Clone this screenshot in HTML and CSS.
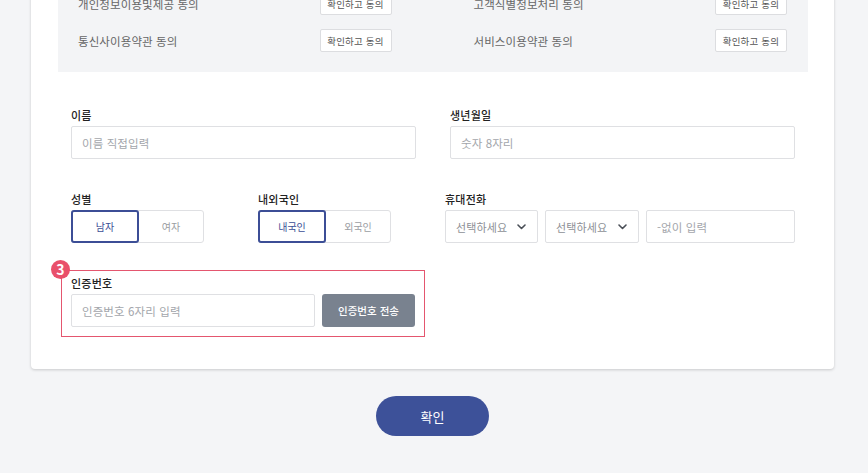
FILE: index.html
```html
<!DOCTYPE html>
<html lang="ko">
<head>
<meta charset="utf-8">
<title>본인인증</title>
<link rel="stylesheet" href="styles.css">
</head>
<body>
<div class="page">
  <div class="card">
    <div class="agree">
      <div class="agree-row"><span>개인정보이용및제공 동의</span><button class="agree-btn">확인하고 동의</button></div>
      <div class="agree-row"><span>고객식별정보처리 동의</span><button class="agree-btn">확인하고 동의</button></div>
      <div class="agree-row"><span>통신사이용약관 동의</span><button class="agree-btn">확인하고 동의</button></div>
      <div class="agree-row"><span>서비스이용약관 동의</span><button class="agree-btn">확인하고 동의</button></div>
    </div>

    <div class="form">
      <div class="row row-main">
        <div class="field field-half">
          <label class="label">이름</label>
          <input class="input" type="text" placeholder="이름 직접입력">
        </div>
        <div class="field field-half">
          <label class="label">생년월일</label>
          <input class="input" type="text" placeholder="숫자 8자리">
        </div>
      </div>

      <div class="row row-sub">
        <div class="field field-toggle">
          <label class="label">성별</label>
          <div class="toggle">
            <span class="toggle-opt is-on">남자</span>
            <span class="toggle-opt">여자</span>
          </div>
        </div>
        <div class="field field-toggle">
          <label class="label">내외국인</label>
          <div class="toggle">
            <span class="toggle-opt is-on">내국인</span>
            <span class="toggle-opt">외국인</span>
          </div>
        </div>
        <div class="field field-phone">
          <label class="label">휴대전화</label>
          <div class="phone">
            <div class="select select-a">선택하세요<svg class="chev" width="9" height="6" viewBox="0 0 9 6"><path d="M1 1l3.5 3.5L8 1" fill="none" stroke="#4a4f57" stroke-width="1.6" stroke-linecap="round" stroke-linejoin="round"/></svg></div>
            <div class="select select-b">선택하세요<svg class="chev" width="9" height="6" viewBox="0 0 9 6"><path d="M1 1l3.5 3.5L8 1" fill="none" stroke="#4a4f57" stroke-width="1.6" stroke-linecap="round" stroke-linejoin="round"/></svg></div>
            <input class="input phone-input" type="text" placeholder="-없이 입력">
          </div>
        </div>
      </div>

      <div class="verify">
        <span class="badge">3</span>
        <label class="label">인증번호</label>
        <div class="verify-row">
          <input class="input verify-input" type="text" placeholder="인증번호 6자리 입력">
          <button class="send-btn">인증번호 전송</button>
        </div>
      </div>
    </div>
  </div>

  <div class="actions">
    <button class="confirm">확인</button>
  </div>
</div>
</body>
</html>
```

FILE: styles.css
```css
* {
  box-sizing: border-box;
}

html, body {
  margin: 0;
  padding: 0;
  height: 100%;
  overflow: hidden;
  background: #f4f5f7;
}

body {
  font-family: "Noto Sans CJK KR", "Noto Sans", sans-serif;
  color: #222;
}

button, input {
  font-family: inherit;
}

.page {
  width: 868px;
}

.card {
  margin-top: -55px;
  margin-left: 31px;
  width: 803px;
  background: #fff;
  border-radius: 4px;
  box-shadow: 0 1px 3px rgba(0, 0, 0, 0.18);
  padding: 27px 26px 32px 27px;
}

/* agreements */
.agree {
  background: #f3f4f6;
  padding: 20px 21px 20px 20px;
  display: grid;
  grid-template-columns: 1fr 1fr;
  column-gap: 82px;
  row-gap: 14px;
}

.agree-row {
  display: flex;
  align-items: center;
  justify-content: space-between;
  height: 23px;
  font-size: 11.5px;
  letter-spacing: 0.1px;
  color: #666;
}

.agree-btn {
  height: 23px;
  width: 72px;
  padding: 0;
  border: 1px solid #dcdde0;
  border-radius: 2px;
  background: #fff;
  font-size: 9.5px;
  letter-spacing: 0.2px;
  color: #555;
}

/* form */
.form {
  padding: 36px 13px 0 13px;
}

.row {
  display: flex;
}

.row-main {
  gap: 34px;
}

.row-sub {
  gap: 54px;
  margin-top: 33px;
}

.field {
  display: flex;
  flex-direction: column;
}

.field-half {
  width: 345px;
}

.field-toggle {
  width: 133px;
}

.field-phone {
  width: 350px;
}

.label {
  display: block;
  height: 14px;
  line-height: 14px;
  font-size: 11px;
  font-weight: 500;
  letter-spacing: 0.2px;
  color: #222;
  margin-bottom: 4px;
}

.input {
  height: 33px;
  width: 100%;
  border: 1px solid #dfe0e3;
  border-radius: 2px;
  background: #fff;
  padding: 0 10px;
  font-size: 11.5px;
  letter-spacing: 0.1px;
  color: #333;
  outline: none;
}

.input::placeholder {
  color: #a3a6ab;
}

/* toggles */
.toggle {
  display: flex;
  height: 33px;
  border: 1px solid #dfe0e3;
  border-radius: 3px;
}

.toggle-opt {
  flex: 1;
  display: flex;
  align-items: center;
  justify-content: center;
  font-size: 10px;
  letter-spacing: 0;
  color: #9a9da2;
}

.toggle-opt.is-on {
  margin: -1px 0 -1px -1px;
  border: 2px solid #3c4e96;
  border-radius: 3px;
  color: #3c4e96;
}

/* phone */
.phone {
  display: flex;
  gap: 7px;
}

.select {
  height: 33px;
  border: 1px solid #dfe0e3;
  border-radius: 2px;
  background: #fff;
  display: flex;
  align-items: center;
  justify-content: space-between;
  padding: 0 11px 0 10px;
  font-size: 11px;
  letter-spacing: 0.1px;
  color: #8d9096;
}

.select-a {
  width: 93px;
}

.select-b {
  width: 94px;
}

.phone-input {
  width: 149px;
}

/* verify */
.verify {
  position: relative;
  margin-top: 27px;
  margin-left: -10px;
  width: 364px;
  border: 1px solid #e4566f;
  padding: 5px 9px 9px 9px;
}

.badge {
  position: absolute;
  left: -11px;
  top: -11px;
  width: 19px;
  height: 19px;
  border-radius: 50%;
  background: #e9506b;
  color: #fff;
  font-size: 14px;
  font-weight: 700;
  line-height: 19px;
  text-align: center;
}

.verify-row {
  display: flex;
  gap: 7px;
}

.verify-input {
  width: 244px;
}

.send-btn {
  width: 93px;
  height: 33px;
  border: none;
  border-radius: 3px;
  background: #79828f;
  color: #fff;
  font-size: 10.5px;
  font-weight: 500;
  letter-spacing: 0;
  padding: 0;
}

/* bottom action */
.actions {
  margin-left: 31px;
  width: 803px;
  display: flex;
  justify-content: center;
  padding-top: 27px;
}

.confirm {
  width: 113px;
  height: 40px;
  border: none;
  border-radius: 20px;
  background: #3d5199;
  color: #fff;
  font-size: 13px;
  font-weight: 400;
  letter-spacing: 0;
  padding: 0;
}
```
